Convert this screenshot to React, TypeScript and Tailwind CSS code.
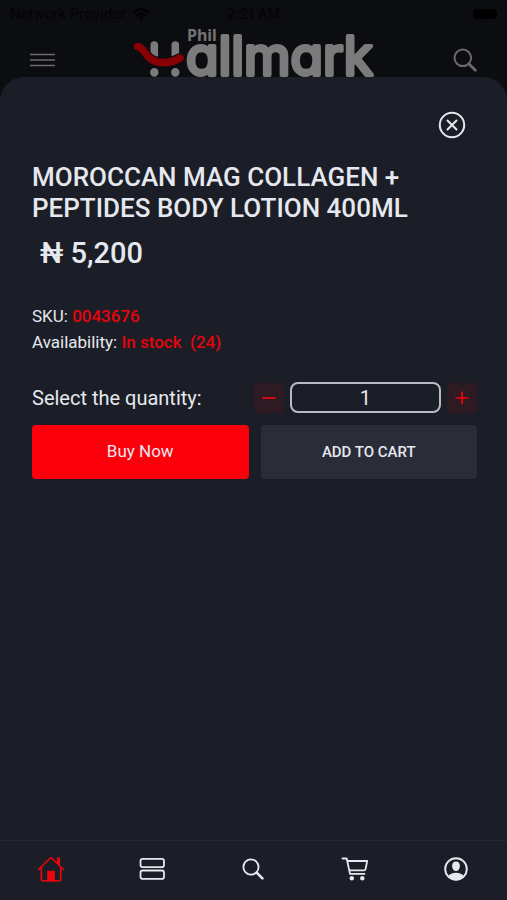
import { useState } from "react";

function Logo() {
  return (
    <svg viewBox="0 0 242 49" className="h-[49px] w-[242px] shrink-0 overflow-visible" role="img" aria-label="Phil Hallmark">
      {/* H built from two bars and two dots, crossed by the smile */}
      <g stroke="#7b7b7b" strokeWidth="7.6" strokeLinecap="round">
        <path d="M21.3 17v11M42.3 17v11" />
        <path d="M21.3 44.2v.4M42.3 44.2v.4" strokeWidth="8.4" />
      </g>
      <path
        d="M4.500 18.500c6 .3 6.500 8.500 14 13 8.500 5 20.500 3.500 28.500-1.500"
        fill="none"
        stroke="#0c0d11"
        strokeWidth="10"
        strokeLinecap="round"
      />
      <path
        d="M4.500 18.500c6 .3 6.500 8.500 14 13 8.500 5 20.500 3.500 28.500-1.500"
        fill="none"
        stroke="#870003"
        strokeWidth="7.600"
        strokeLinecap="round"
      />
      <text x="54" y="13" fill="#737373" fontSize="16" fontWeight="700" fontFamily='"Noto Sans", sans-serif'>
        Phil
      </text>
      <text
        x="53"
        y="47"
        fill="#7b7b7b"
        stroke="#7b7b7b"
        strokeWidth="4"
        strokeLinejoin="round"
        fontSize="53"
        fontWeight="400"
        fontFamily="Inter, sans-serif"
        style={{ fontFeatureSettings: '"cv11"' }}
      >
        allmark
      </text>
    </svg>
  );
}

function SearchIcon({ className }: { className: string }) {
  return (
    <svg viewBox="0 0 24 24" className={className} fill="none" stroke="currentColor">
      <circle cx="9.800" cy="9.800" r="8.300" strokeWidth="2" />
      <path d="M16 16l6.300 6.300" strokeWidth="2.800" strokeLinecap="round" />
    </svg>
  );
}

function HomeIcon() {
  return (
    <svg viewBox="0 0 28 28" className="size-7" fill="none" stroke="currentColor" strokeWidth="1.600">
      <path d="M1.500 14.500 14 2.500l12.500 12" strokeLinejoin="round" strokeLinecap="round" />
      <path d="M4.300 12v12.300q0 1.500 1.500 1.500h16.400q1.500 0 1.500-1.500V12" />
      <path d="M20 2.500h3v8.500l-3-3z" fill="currentColor" stroke="none" />
      <path d="M11 25.500v-9h6v9z" fill="currentColor" />
    </svg>
  );
}

function ServerIcon() {
  return (
    <svg viewBox="0 0 28 28" className="size-7" fill="none" stroke="currentColor" strokeWidth="1.800">
      <rect x="2.500" y="3.800" width="23.500" height="8.400" rx="2.200" />
      <rect x="2.500" y="15.500" width="23.500" height="8.400" rx="2.200" />
    </svg>
  );
}

function CartIcon() {
  return (
    <svg viewBox="0 0 28 28" className="size-7" fill="none" stroke="currentColor" strokeWidth="1.800">
      <path d="M1.500 3.500h4.200l3.300 15.400h14.500" strokeLinecap="round" strokeLinejoin="round" />
      <path d="M6.300 6h19.900l-1.700 8.300q-.3 1-1.400 1H8.300" strokeLinejoin="round" />
      <circle cx="10.800" cy="23.300" r="2.200" fill="currentColor" stroke="none" />
      <circle cx="21.300" cy="23.300" r="2.200" fill="currentColor" stroke="none" />
    </svg>
  );
}

function ProfileIcon() {
  return (
    <svg viewBox="0 0 28 28" className="size-7">
      <circle cx="14" cy="14" r="10.800" fill="none" stroke="currentColor" strokeWidth="1.900" />
      <path
        d="M14 6.500c2.500 0 4 1.900 3.900 4.500-.1 3-1.800 5-3.900 5s-3.800-2-3.900-5c-.1-2.600 1.400-4.500 3.900-4.500zM6 21.500c1.500-2.600 4.500-3.800 8-3.800s6.500 1.200 8 3.800c-2 2.300-4.800 3.700-8 3.700s-6-1.400-8-3.700z"
        fill="currentColor"
      />
    </svg>
  );
}

const tabs = [
  { label: "Home", icon: <HomeIcon />, active: true },
  { label: "Categories", icon: <ServerIcon />, active: false },
  { label: "Search", icon: <SearchIcon className="size-[22px]" />, active: false },
  { label: "Cart", icon: <CartIcon />, active: false },
  { label: "Account", icon: <ProfileIcon />, active: false },
];

export default function App() {
  const [quantity, setQuantity] = useState("1");

  const step = (by: number) => setQuantity(String(Math.max(1, (Number(quantity) || 1) + by)));

  return (
    <div className="flex min-h-screen flex-col bg-[#0c0d11] font-[Roboto,sans-serif] text-[#e6e8ef]">
      {/* Status bar, dimmed behind the sheet */}
      <div className="grid h-7 grid-cols-3 items-center px-2.5 font-[Inter,sans-serif] text-sm text-[#030304]">
        <div className="flex items-center gap-1.5 whitespace-nowrap">
          Network Provider
          <svg viewBox="0 0 18 13" className="h-[13px] w-[18px]" fill="none" stroke="currentColor" strokeWidth="2.400">
            <path d="M1 4.500q8-6.500 16 0M4 8q5-4 10 0" />
            <path d="M6.300 9.500q2.700-2 5.400 0L9 12.500z" fill="currentColor" stroke="none" />
          </svg>
        </div>
        <span className="text-center">2:21 AM</span>
        <span className="h-2.5 w-6 justify-self-end rounded-sm bg-black" />
      </div>

      <header className="flex h-[49px] items-center justify-between px-[30px]">
        <button type="button" aria-label="Menu" className="mt-3.5 text-[#6b6b6d]">
          <svg viewBox="0 0 25 14" className="h-3.5 w-[25px]" stroke="currentColor" strokeWidth="1.500">
            <path d="M0 1.500h25M0 7h25M0 12.500h25" />
          </svg>
        </button>
        <Logo />
        <button type="button" aria-label="Search" className="mt-3.5 text-[#6b6b6d]">
          <SearchIcon className="size-6" />
        </button>
      </header>

      <main className="flex flex-1 flex-col rounded-t-3xl bg-[#1b1e26]">
        <div className="flex flex-col pt-[34px] pr-[30px] pl-8">
          <button type="button" aria-label="Close" className="mr-[11px] self-end">
            <svg viewBox="0 0 28 28" className="size-7" fill="none" stroke="currentColor" strokeWidth="2">
              <circle cx="14" cy="14" r="12.200" />
              <path d="M9.500 9.500l9 9M18.500 9.500l-9 9" strokeLinecap="round" />
            </svg>
          </button>

          <h1 className="mt-[23px] text-[26px] leading-[31px] font-medium">
            MOROCCAN MAG COLLAGEN + PEPTIDES BODY LOTION 400ML
          </h1>
          <p className="mt-3 pl-2 text-[29px] leading-[34px] font-medium">₦ 5,200</p>

          <div className="mt-[33px] text-[17px] leading-[26px]">
            <p>
              SKU: <span className="font-medium text-[#e8040c]">0043676</span>
            </p>
            <p className="whitespace-pre-wrap">
              Availability: <span className="font-medium text-[#e8040c]">In stock{"  "}(24)</span>
            </p>
          </div>

          <div className="mt-[27px] flex items-center gap-1.5">
            <label htmlFor="quantity" className="flex-1 text-xl">
              Select the quantity:
            </label>
            <button
              type="button"
              aria-label="Decrease quantity"
              onClick={() => step(-1)}
              className="grid size-[30px] place-items-center rounded bg-[#2e1a23] text-[#f0040c]"
            >
              <svg viewBox="0 0 14 14" className="size-3.5" stroke="currentColor" strokeWidth="1.700">
                <path d="M.5 7h13" />
              </svg>
            </button>
            <input
              id="quantity"
              inputMode="numeric"
              value={quantity}
              onChange={(e) => setQuantity(e.target.value)}
              className="h-[31px] w-[34%] rounded-lg border-2 border-[#b9bbc2] bg-transparent text-center text-xl leading-none outline-none"
            />
            <button
              type="button"
              aria-label="Increase quantity"
              onClick={() => step(1)}
              className="grid size-[30px] place-items-center rounded bg-[#2e1a23] text-[#f0040c]"
            >
              <svg viewBox="0 0 14 14" className="size-3.5" stroke="currentColor" strokeWidth="1.700">
                <path d="M.5 7h13M7 .5v13" />
              </svg>
            </button>
          </div>

          <div className="mt-3 grid grid-cols-2 gap-3">
            <button type="button" className="h-[54px] rounded bg-[#fb000a] text-[17px]">
              Buy Now
            </button>
            <button type="button" className="h-[54px] rounded bg-[#2a2d38] text-[15px] font-medium">
              ADD TO CART
            </button>
          </div>
        </div>

        <nav className="mt-auto grid h-[60px] grid-cols-5 border-t border-[#252830] pb-1">
          {tabs.map((tab) => (
            <a
              key={tab.label}
              href="#"
              aria-label={tab.label}
              className={`grid place-items-center ${tab.active ? "text-[#f0040c]" : "text-[#e6e8ef]"}`}
            >
              {tab.icon}
            </a>
          ))}
        </nav>
      </main>
    </div>
  );
}
